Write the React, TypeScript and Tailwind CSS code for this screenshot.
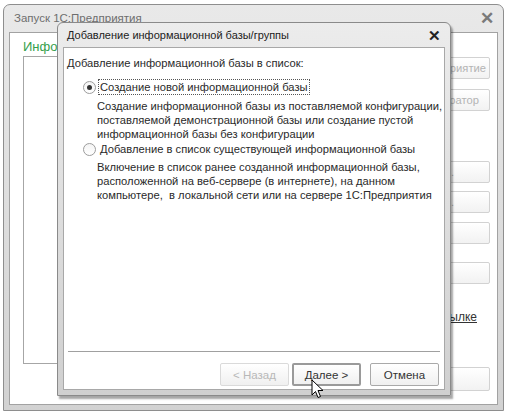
import React from "react";

const OuterButton = ({ label, className }: { label: string; className?: string }) => {
  return (
    <div
      className={
        "h-[22px] w-[91px] border border-[#d2d2d2] rounded-[2px] bg-gradient-to-b from-white to-[#f2f2f2] flex items-center whitespace-nowrap text-[11.2px] text-[#b4b4b4] " +
        (className || "")
      }
    >
      {label}
    </div>
  );
};

const DialogButton = ({
  label,
  disabled,
  primary,
  className,
}: {
  label: string;
  disabled?: boolean;
  primary?: boolean;
  className?: string;
}) => {
  let border = "border border-[#a9a9a9]";
  let text = "text-[#333]";
  if (disabled) {
    border = "border border-[#dadada]";
    text = "text-[#b8b8b8]";
  }
  if (primary) {
    border = "border-2 border-[#9a9a9a]";
  }
  return (
    <div
      className={`h-[23px] flex items-center justify-center rounded-[2px] bg-gradient-to-b from-white to-[#f0f0f0] text-[11.5px] ${border} ${text} ${className || ""}`}
    >
      {label}
    </div>
  );
};

const Radio = ({ checked }: { checked?: boolean }) => (
  <div className="w-[13px] h-[13px] rounded-full border border-[#9c9c9c] bg-gradient-to-b from-[#f4f4f4] to-white flex items-center justify-center shrink-0">
    {checked && <div className="w-[5px] h-[5px] rounded-full bg-[#333]" />}
  </div>
);

const Cursor = () => (
  <svg width="14" height="21" viewBox="0 0 14 21" className="absolute left-[311px] top-[379px]">
    <path
      d="M1 1 L1 16 L4.5 12.5 L7 18.5 L9.5 17.5 L7 11.5 L12 11.5 Z"
      fill="#fff"
      stroke="#000"
      strokeWidth="1"
      strokeLinejoin="round"
    />
  </svg>
);

export default function App() {
  return (
    <div
      className="relative w-[508px] h-[415px] bg-white overflow-hidden"
      style={{ fontFamily: '"Liberation Sans", Arial, sans-serif' }}
    >
      {/* main launcher window */}
      <div className="ml-[3px] mt-[4px] w-[501px] h-[407px] flex flex-col rounded-t-[7px] border border-[#8e8e8e] bg-gradient-to-b from-[#e9e9e9] to-[#d2d2d2]">
        <div className="h-[27px] flex items-center justify-between pl-[10px] pr-[9px]">
          <span className="text-[11.5px] text-[#6e6e6e]">Запуск 1С:Предприятия</span>
          <span className="text-[17px] leading-none font-bold text-[#7a7a7a]">✕</span>
        </div>
        <div className="flex-1 mx-[5px] mb-[5px] border border-[#a2a2a2] bg-white flex pl-[13px] pr-[7px]">
          <div className="flex flex-col w-[367px]">
            <div className="text-[13px] text-[#35a04c] mt-[6px] leading-[16px]">Информационные базы:</div>
            <div className="mt-[1px] h-[308px] border border-[#a6a6a6]" />
          </div>
          <div className="ml-auto flex flex-col items-end pt-[24px]">
            <OuterButton label="1С:Предприятие" className="justify-end pr-[3px]" />
            <OuterButton label="Конфигуратор" className="justify-end pr-[10px] mt-[10px]" />
            <OuterButton label="Добавить..." className="justify-end pr-[35px] mt-[50px]" />
            <OuterButton label="Изменить..." className="justify-end pr-[35px] mt-[8px]" />
            <OuterButton label="Удалить" className="justify-end pr-[42px] mt-[9px]" />
            <OuterButton label="Настройка..." className="justify-end pr-[40px] mt-[18px]" />
            <div className="mt-[24px] text-[12px] text-[#333] underline w-[91px] text-right pr-[13px]">
              по ссылке
            </div>
            <OuterButton label="Выход" className="pl-[6px] mt-[41px] h-[24px]" />
          </div>
        </div>
      </div>

      {/* modal dialog */}
      <div className="absolute left-[57px] top-[22px] w-[394px] h-[374px] flex flex-col rounded-t-[6px] border border-[#8a8a8a] bg-gradient-to-b from-[#ececec] to-[#d0d0d0] shadow-[2px_3px_2px_rgba(0,0,0,0.35)]">
        <div className="h-[24px] flex items-center justify-between pl-[9px] pr-[9px]">
          <span className="text-[11px] text-[#222]">Добавление информационной базы/группы</span>
          <span className="text-[15px] leading-none font-bold text-[#222]">✕</span>
        </div>
        <div className="flex-1 mx-[5px] mb-[5px] border border-[#a8a8a8] bg-white flex flex-col text-[11.2px] text-[#2a2a2a] leading-[14px]">
          <div className="pl-[3px] pt-[8px]">Добавление информационной базы в список:</div>
          <div className="flex items-center pl-[19px] mt-[9px]">
            <Radio checked />
            <span className="ml-[2px] border border-dotted border-[#555] px-[1px]">
              Создание новой информационной базы
            </span>
          </div>
          <div className="pl-[33px] mt-[4px]">
            <div>Создание информационной базы из поставляемой конфигурации,</div>
            <div>поставляемой демонстрационной базы или создание пустой</div>
            <div>информационной базы без конфигурации</div>
          </div>
          <div className="flex items-center pl-[19px] mt-[1px]">
            <Radio />
            <span className="ml-[3px] px-[1px]">Добавление в список существующей информационной базы</span>
          </div>
          <div className="pl-[33px] mt-[4px]">
            <div>Включение в список ранее созданной информационной базы,</div>
            <div>расположенной на веб-сервере (в интернете), на данном</div>
            <div>компьютере,&nbsp; в локальной сети или на сервере 1С:Предприятия</div>
          </div>
          <div className="mt-auto mx-[4px] border-t border-[#a0a0a0]" />
          <div className="flex justify-end pr-[5px] pt-[11px] pb-[3px]">
            <DialogButton label="< Назад" disabled className="w-[69px]" />
            <DialogButton label="Далее >" primary className="w-[69px] ml-[3px]" />
            <DialogButton label="Отмена" className="w-[69px] ml-[9px]" />
          </div>
        </div>
      </div>

      <Cursor />
    </div>
  );
}
